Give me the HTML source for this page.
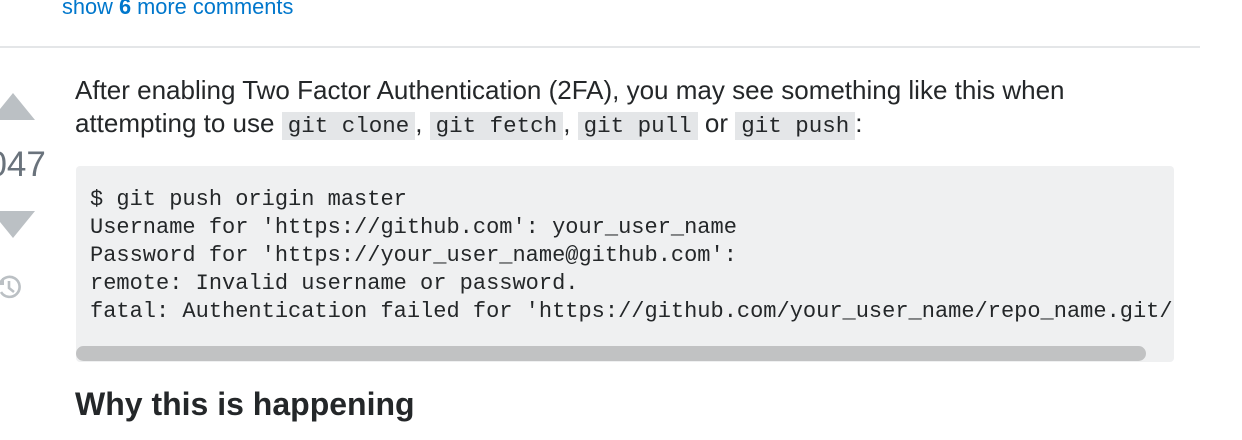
<!DOCTYPE html>
<html><head><meta charset="utf-8"><style>
body{margin:0;width:1242px;height:440px;overflow:hidden;background:#fff;font-family:"Liberation Sans",sans-serif;color:#242729;position:relative}
.a{position:absolute}
.link{left:62px;top:-6px;font-size:21.8px;color:#0077cc}
hr{position:absolute;left:0;top:46px;width:1200px;margin:0;border:0;border-top:2px solid #e4e6e8}
.p{left:75px;top:74px;font-size:26px;line-height:33px;width:1010px}
code{font-family:"Liberation Mono","DejaVu Sans Mono",monospace;font-size:22.5px;background:#e4e6e8;padding:1px 6px}
pre{position:absolute;left:76px;top:166px;width:1098px;height:196px;margin:0;background:#eff0f1;border-radius:4px;font-family:"Liberation Mono","DejaVu Sans Mono",monospace;font-size:22px;line-height:28px;padding:20px 0 0 14px;box-sizing:border-box;overflow:hidden;white-space:pre;color:#242729}
.sb{left:76px;top:346px;width:1070px;height:15px;background:#c1c2c3;border-radius:8px}
h2{position:absolute;left:75px;top:386px;margin:0;font-size:32px;font-weight:bold}
</style></head><body>
<div class="a link">show <b>6</b> more comments</div>
<hr>
<div class="a" style="left:-9px;top:93px;width:0;height:0;border-left:22px solid transparent;border-right:22px solid transparent;border-bottom:27px solid #bbc0c4"></div>
<div class="a" style="left:-32px;top:145px;font-size:35px;color:#6a737c">1047</div>
<div class="a" style="left:-9px;top:211px;width:0;height:0;border-left:22px solid transparent;border-right:22px solid transparent;border-top:27px solid #bbc0c4"></div>
<svg class="a" style="left:-4px;top:272px" width="28" height="30" viewBox="0 0 28 30"><path d="M4 12 A10 10 0 1 1 5 20" fill="none" stroke="#bbc0c4" stroke-width="2.6"/><path d="M13 9 V16 L18 20" fill="none" stroke="#bbc0c4" stroke-width="2.6"/><path d="M0 12 H7 V6" fill="none" stroke="#bbc0c4" stroke-width="2"/></svg>
<div class="a p">After enabling Two Factor Authentication (2FA), you may see something like this when attempting to use <code>git clone</code>, <code>git fetch</code>, <code>git pull</code> or <code>git push</code>:</div>
<pre>$ git push origin master
Username for 'https://github.com': your_user_name
Password for 'https://your_user_name@github.com':
remote: Invalid username or password.
fatal: Authentication failed for 'https://github.com/your_user_name/repo_name.git/'</pre>
<div class="a sb"></div>
<h2>Why this is happening</h2>
</body></html>
